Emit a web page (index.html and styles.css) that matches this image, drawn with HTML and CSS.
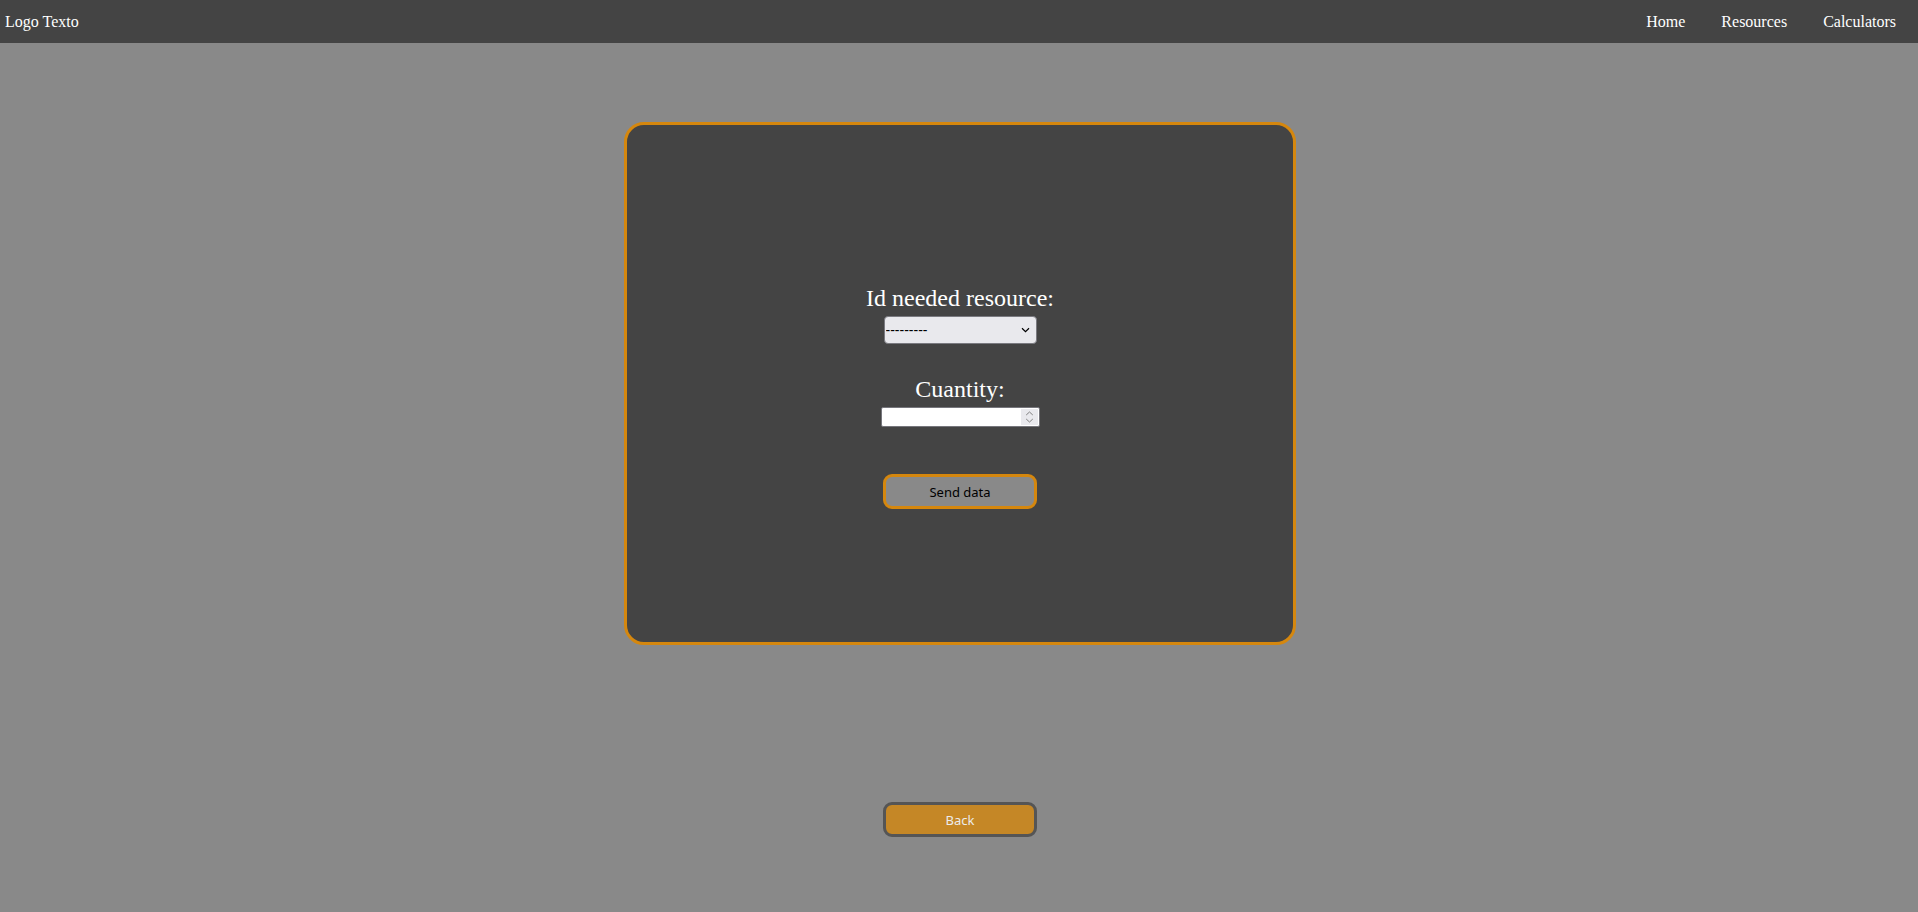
FILE: index.html
```html
<!DOCTYPE html>
<html lang="en">
<head>
<meta charset="utf-8">
<title>Resource calculator</title>
<link rel="stylesheet" href="styles.css">
</head>
<body>
<nav class="navbar">
  <a class="logo" href="#">Logo Texto</a>
  <ul class="nav-links">
    <li><a href="#">Home</a></li>
    <li><a href="#">Resources</a></li>
    <li><a href="#">Calculators</a></li>
  </ul>
</nav>
<main class="page">
  <form class="card">
    <label class="field-label" for="resource">Id needed resource:</label>
    <select class="select" id="resource" name="resource">
      <option>---------</option>
    </select>
    <label class="field-label second" for="qty">Cuantity:</label>
    <div class="number">
      <input class="number-input" id="qty" name="qty" type="text">
      <span class="spinner">
        <svg width="9" height="14" viewBox="0 0 9 14"><path d="M1.2 5 L4.5 2 L7.8 5 M1.2 9 L4.5 12 L7.8 9" fill="none" stroke="#808080" stroke-width="1"/></svg>
      </span>
    </div>
    <button class="send" type="button">Send data</button>
  </form>
  <button class="back" type="button">Back</button>
</main>
</body>
</html>
```
FILE: styles.css
```css
* { box-sizing: border-box; }
html, body { margin: 0; padding: 0; }
body {
  background: #898989;
  font-family: "Liberation Serif", "Times New Roman", serif;
  min-height: 912px;
}
.navbar {
  height: 43px;
  background: #444444;
  display: flex;
  align-items: center;
  justify-content: space-between;
  padding: 0 4px 0 5px;
}
.logo {
  color: #ffffff;
  text-decoration: none;
  font-size: 16px;
}
.nav-links {
  list-style: none;
  margin: 0;
  padding: 0;
  display: flex;
}
.nav-links a {
  display: block;
  padding: 0 18px;
  color: #ffffff;
  text-decoration: none;
  font-size: 16px;
}
.page {
  display: flex;
  flex-direction: column;
  align-items: center;
  padding-left: 2px;
}
.card {
  margin-top: 79px;
  width: 672px;
  height: 523px;
  background: #444444;
  border: 3px solid #d5870e;
  border-radius: 20px;
  display: flex;
  flex-direction: column;
  align-items: center;
  padding-top: 160px;
}
.field-label {
  display: block;
  color: #ffffff;
  font-size: 24px;
  line-height: 27.6px;
}
.field-label.second { margin-top: 32px; }
.select {
  -webkit-appearance: none;
  appearance: none;
  margin-top: 3px;
  width: 153px;
  height: 28px;
  border: 1px solid #7a7a80;
  border-radius: 4px;
  background-color: #e9e9ed;
  background-image: url("data:image/svg+xml;utf8,<svg xmlns='http://www.w3.org/2000/svg' width='9' height='6' viewBox='0 0 9 6'><path d='M1 1.2 L4.5 4.6 L8 1.2' fill='none' stroke='black' stroke-width='1.2'/></svg>");
  background-repeat: no-repeat;
  background-position: right 6px center;
  padding: 0 0 0 1px;
  font-family: "Liberation Sans", Arial, sans-serif;
  font-size: 14px;
  color: #000;
}
.number {
  margin-top: 4px;
  width: 159px;
  height: 20px;
  border: 1px solid #76767c;
  border-radius: 2px;
  background: #ffffff;
  display: flex;
  padding: 1px;
}
.number-input {
  flex: 1;
  min-width: 0;
  border: 0;
  outline: none;
  padding: 0 2px;
  font-size: 13px;
  background: transparent;
}
.spinner {
  width: 17px;
  background: #e9e9ed;
  display: flex;
  align-items: center;
  justify-content: center;
}
.send {
  margin-top: 47px;
  width: 154px;
  height: 35px;
  background: #898989;
  border: 3px solid #d5870e;
  border-radius: 9px;
  color: #000;
  font-family: "Noto Sans", "DejaVu Sans", sans-serif;
  font-size: 13px;
  padding: 0;
}
.back {
  margin-top: 157px;
  width: 154px;
  height: 35px;
  background: #c58726;
  border: 3px solid #555555;
  border-radius: 9px;
  color: #ececec;
  font-family: "Noto Sans", "DejaVu Sans", sans-serif;
  font-size: 13px;
  padding: 0;
}
```
